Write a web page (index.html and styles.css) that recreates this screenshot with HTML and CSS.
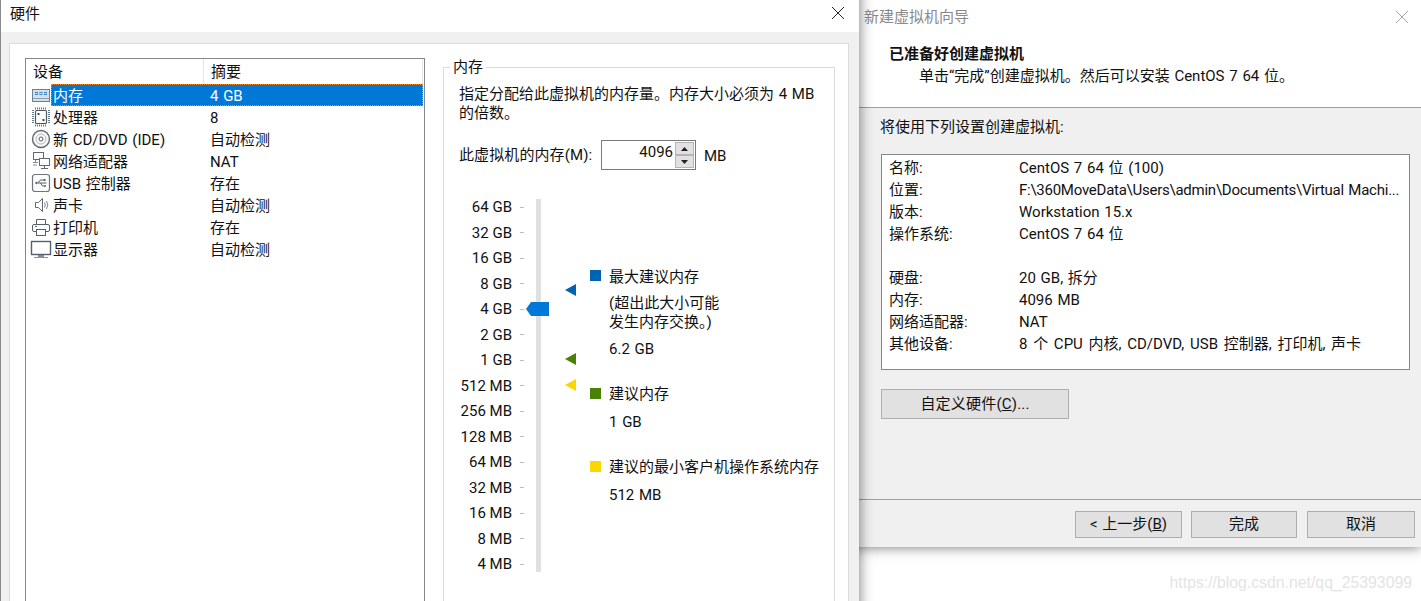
FILE: index.html
```html
<!DOCTYPE html>
<html lang="zh-CN">
<head>
<meta charset="utf-8">
<title>硬件</title>
<link rel="stylesheet" href="styles.css">
</head>
<body>
<div class="desktop">
  <section class="wizard">
    <header class="wizard-title">
      <span>新建虚拟机向导</span>
      <svg class="close" width="14" height="14" viewBox="0 0 14 14"><path d="M1 1l12 12M13 1L1 13" stroke="#a6a6a6" fill="none"/></svg>
    </header>
    <div class="wizard-head">
      <h1>已准备好创建虚拟机</h1>
      <p>单击“完成”创建虚拟机。然后可以安装 CentOS 7 64 位。</p>
    </div>
    <div class="wizard-main">
      <p class="wizard-lead">将使用下列设置创建虚拟机:</p>
      <dl class="summary">
        <dt>名称:</dt><dd>CentOS 7 64 位 (100)</dd>
        <dt>位置:</dt><dd class="path">F:\360MoveData\Users\admin\Documents\Virtual Machi...</dd>
        <dt>版本:</dt><dd>Workstation 15.x</dd>
        <dt>操作系统:</dt><dd>CentOS 7 64 位</dd>
        <dt class="gap"></dt><dd class="gap"></dd>
        <dt>硬盘:</dt><dd>20 GB, 拆分</dd>
        <dt>内存:</dt><dd>4096 MB</dd>
        <dt>网络适配器:</dt><dd>NAT</dd>
        <dt>其他设备:</dt><dd class="mixed">8 个 CPU 内核, CD/DVD, USB 控制器, 打印机, 声卡</dd>
      </dl>
      <button class="btn btn-wide" type="button">自定义硬件(<u>C</u>)...</button>
    </div>
    <footer class="wizard-foot">
      <button class="btn btn-back" type="button">&lt; 上一步(<u>B</u>)</button>
      <button class="btn btn-finish" type="button">完成</button>
      <button class="btn btn-cancel" type="button">取消</button>
    </footer>
  </section>

  <section class="hardware">
    <header class="hw-title">
      <span>硬件</span>
      <svg class="close" width="14" height="14" viewBox="0 0 14 14"><path d="M1 1l12 12M13 1L1 13" stroke="#222" fill="none"/></svg>
    </header>
    <div class="hw-body">
      <div class="hw-panel">
        <div class="devices">
          <div class="dev-head"><span>设备</span><span>摘要</span></div>
          <div class="dev-row selected">
            <svg class="ico" width="22" height="22" viewBox="0 0 22 22"><rect x="2.500" y="5.500" width="17" height="12" fill="#d3dfea" stroke="#6a8196"/><path d="M5 8h3v3H5zM9.500 8h3v3h-3zM14 8h3v3h-3z" fill="#3f86c6"/><path d="M5.500 9.500h2M10 9.500h2M14.500 9.500h2" stroke="#dbe9f5"/><path d="M3 14.500h16" stroke="#8ba0b3"/></svg>
            <div class="dev-cells"><span class="dev-name">内存</span><span>4 GB</span></div>
          </div>
          <div class="dev-row">
            <svg class="ico" width="22" height="22" viewBox="0 0 22 22"><rect x="5.500" y="4.500" width="11" height="13" rx="1" fill="#fff" stroke="#4f5a64" stroke-width="1.200"/><path d="M5 2.500h12M5 19.500h12" stroke="#66798b" stroke-width="2" stroke-dasharray="1 1"/><path d="M3 4v14M19 4v14" stroke="#66798b" stroke-width="2" stroke-dasharray="1 1"/><rect x="7.500" y="7" width="2" height="2" fill="#444"/><rect x="12.500" y="13" width="2" height="2" fill="#444"/></svg>
            <div class="dev-cells"><span class="dev-name">处理器</span><span>8</span></div>
          </div>
          <div class="dev-row">
            <svg class="ico" width="22" height="22" viewBox="0 0 22 22"><circle cx="11" cy="11" r="8.500" fill="#f7f7f7" stroke="#5f6a74" stroke-width="1.400"/><circle cx="11" cy="11" r="5" fill="none" stroke="#b4bbc1"/><circle cx="11" cy="11" r="2" fill="#fff" stroke="#56606a"/></svg>
            <div class="dev-cells"><span class="dev-name">新 CD/DVD (IDE)</span><span>自动检测</span></div>
          </div>
          <div class="dev-row">
            <svg class="ico" width="22" height="22" viewBox="0 0 22 22"><rect x="3.500" y="2.500" width="10" height="7" fill="#fff" stroke="#5f6a74"/><path d="M3 12.500h5M5.500 10v2M3 15h4" stroke="#7d8d9c"/><rect x="9.500" y="8.500" width="10" height="7" fill="#fff" stroke="#5f6a74"/><path d="M14.500 16v2M11 18.500h7" stroke="#5f6a74"/></svg>
            <div class="dev-cells"><span class="dev-name">网络适配器</span><span>NAT</span></div>
          </div>
          <div class="dev-row">
            <svg class="ico" width="22" height="22" viewBox="0 0 22 22"><rect x="2.500" y="2.500" width="17" height="17" rx="2.500" fill="#fbfbfb" stroke="#6b7680" stroke-width="1.200"/><path d="M5.500 11h11M8 11l2.500-3h3M10.500 11l2 3h1.500" fill="none" stroke="#56606a"/><path d="M5 11l2-1.500v3z" fill="#56606a"/><rect x="13.500" y="7" width="2" height="2" fill="#56606a"/><circle cx="15" cy="14" r="1" fill="#56606a"/></svg>
            <div class="dev-cells"><span class="dev-name">USB 控制器</span><span>存在</span></div>
          </div>
          <div class="dev-row">
            <svg class="ico" width="22" height="22" viewBox="0 0 22 22"><path d="M5.500 8.500h3l4-4v13l-4-4h-3z" fill="#fff" stroke="#5f6a74"/><path d="M14.500 8.500q1.500 2.500 0 5M16.500 7q2.500 4 0 8" fill="none" stroke="#7d8791"/></svg>
            <div class="dev-cells"><span class="dev-name">声卡</span><span>自动检测</span></div>
          </div>
          <div class="dev-row">
            <svg class="ico" width="22" height="22" viewBox="0 0 22 22"><path d="M6.500 8V3.500h9V8" fill="#fff" stroke="#56606a"/><rect x="2.500" y="8.500" width="17" height="7" rx="1.500" fill="#fff" stroke="#56606a"/><rect x="6.500" y="13.500" width="9" height="6" fill="#fff" stroke="#56606a"/><path d="M5 10.500h2" stroke="#56606a"/></svg>
            <div class="dev-cells"><span class="dev-name">打印机</span><span>存在</span></div>
          </div>
          <div class="dev-row">
            <svg class="ico" width="22" height="22" viewBox="0 0 22 22"><rect x="1.500" y="3.500" width="19" height="13" fill="#fff" stroke="#56606a" stroke-width="1.400"/><path d="M8 18h6" stroke="#5f6a74" stroke-width="1.500"/><path d="M4 19.500h14" stroke="#8b959e"/></svg>
            <div class="dev-cells"><span class="dev-name">显示器</span><span>自动检测</span></div>
          </div>
        </div>

        <fieldset class="memory">
          <legend>内存</legend>
          <p class="memory-desc">指定分配给此虚拟机的内存量。内存大小必须为 4 MB<br>的倍数。</p>
          <div class="mem-input">
            <label>此虚拟机的内存(M):</label>
            <div class="spin">
              <span class="spin-value">4096</span>
              <div class="spin-btns">
                <span class="spin-btn"><svg width="7" height="4" viewBox="0 0 7 4"><path d="M3.500 0L7 4H0z" fill="#222"/></svg></span>
                <span class="spin-btn"><svg width="7" height="4" viewBox="0 0 7 4"><path d="M0 0h7L3.500 4z" fill="#222"/></svg></span>
              </div>
            </div>
            <span class="unit">MB</span>
          </div>
          <div class="scale">
            <div class="scale-labels">
              <div class="tick"><span>64 GB</span></div>
              <div class="tick"><span>32 GB</span></div>
              <div class="tick"><span>16 GB</span></div>
              <div class="tick"><span>8 GB</span></div>
              <div class="tick"><span>4 GB</span></div>
              <div class="tick"><span>2 GB</span></div>
              <div class="tick"><span>1 GB</span></div>
              <div class="tick"><span>512 MB</span></div>
              <div class="tick"><span>256 MB</span></div>
              <div class="tick"><span>128 MB</span></div>
              <div class="tick"><span>64 MB</span></div>
              <div class="tick"><span>32 MB</span></div>
              <div class="tick"><span>16 MB</span></div>
              <div class="tick"><span>8 MB</span></div>
              <div class="tick"><span>4 MB</span></div>
            </div>
            <div class="track"></div>
            <svg class="thumb" width="23" height="14" viewBox="0 0 23 14"><path d="M0 7L5 0h18v14H5z" fill="#0078d7"/></svg>
            <svg class="mark mark-max" width="11" height="12" viewBox="0 0 11 12"><path d="M0 6L11 0v12z" fill="#0063b1"/></svg>
            <svg class="mark mark-rec" width="11" height="12" viewBox="0 0 11 12"><path d="M0 6L11 0v12z" fill="#498205"/></svg>
            <svg class="mark mark-min" width="11" height="12" viewBox="0 0 11 12"><path d="M0 6L11 0v12z" fill="#fcd600"/></svg>
            <div class="legend-list">
              <div class="legend-item">
                <i class="swatch swatch-max"></i>
                <div>
                  <p>最大建议内存</p>
                  <p class="note">(超出此大小可能<br>发生内存交换。)</p>
                  <p class="value value-tight">6.2 GB</p>
                </div>
              </div>
              <div class="legend-item">
                <i class="swatch swatch-rec"></i>
                <div>
                  <p>建议内存</p>
                  <p class="value">1 GB</p>
                </div>
              </div>
              <div class="legend-item">
                <i class="swatch swatch-min"></i>
                <div>
                  <p>建议的最小客户机操作系统内存</p>
                  <p class="value">512 MB</p>
                </div>
              </div>
            </div>
          </div>
        </fieldset>
      </div>
    </div>
  </section>

  <div class="watermark">https://blog.csdn.net/qq_25393099</div>
</div>
</body>
</html>
```

FILE: styles.css
```css
* { box-sizing: border-box; }
html, body { margin: 0; padding: 0; }
body {
  width: 1421px;
  height: 601px;
  overflow: hidden;
  background: #fff;
  color: #111;
  font: 15px/20px Roboto, "Noto Sans CJK SC", sans-serif;
  word-spacing: 1px;
}
p, h1, dl, dd { margin: 0; }
.desktop { position: relative; width: 1421px; height: 601px; overflow: hidden; background: #fff; }

/* Hardware dialog (front window) */
.hardware {
  position: absolute;
  left: 0;
  top: -20px;
  width: 859px;
  height: 660px;
  display: flex;
  flex-direction: column;
  background: #f0f0f0;
  border-left: 1px solid #8a8a8a;
  box-shadow: 0 0 13px rgba(0, 0, 0, .55);
  z-index: 2;
}
.hw-title {
  flex: none;
  height: 52px;
  padding: 20px 14px 0 9px;
  background: #fff;
  display: flex;
  justify-content: space-between;
  align-items: center;
}
.hw-title span { margin-top: -5px; }
.hw-title .close { margin-top: -6px; }
.hw-body { flex: 1; padding: 11px 10px 0 8px; display: flex; min-height: 0; }
.hw-panel {
  flex: 1;
  display: flex;
  gap: 18px;
  align-items: stretch;
  background: #fff;
  border: 1px solid #dcdcdc;
  padding: 14px 13px 0 15px;
}
.devices {
  flex: none;
  width: 400px;
  border: 1px solid #82878f;
  background: #fff;
}
.dev-head {
  display: grid;
  grid-template-columns: 178px 1fr;
  height: 25px;
  line-height: 27px;
  margin-right: 1px;
  border-right: 1px solid #e5e5e5;
}
.dev-head span { padding-left: 7px; }
.dev-head span:first-child { border-right: 1px solid #e5e5e5; }
.dev-row { display: flex; height: 22px; line-height: 24px; padding-right: 1px; }
.ico { flex: none; margin: 0 -1px 0 4px; }
.dev-cells { flex: 1; display: flex; padding-left: 2px; }
.dev-name { flex: none; width: 157px; white-space: nowrap; }
.selected .dev-cells {
  background: #0078d7;
  color: #fff;
  outline: 1px dotted #f08a24;
  outline-offset: -1px;
}

.memory {
  flex: none;
  width: 392px;
  margin: -1px 0 0;
  padding: 6px 0 0 15px;
  border: 1px solid #dcdcdc;
  min-inline-size: 0;
}
.memory legend { margin-left: -9px; padding: 0 3px; line-height: 20px; height: 20px; }
.memory-desc { width: 370px; padding-top: 2px; line-height: 19px; }
.mem-input { display: flex; align-items: center; height: 30px; margin-top: 17px; }
.mem-input label { width: 142px; white-space: nowrap; line-height: 22px; word-spacing: 0; letter-spacing: .1px; }
.unit { margin-top: 2px; }
.spin {
  width: 95px;
  height: 30px;
  border: 1px solid #7a7a7a;
  display: flex;
  justify-content: flex-end;
  margin-right: 8px;
  padding: 1px;
}
.spin-value { flex: 1; text-align: right; padding-right: 2px; line-height: 20px; }
.spin-btns { flex: none; width: 19px; display: flex; flex-direction: column; }
.spin-btn {
  flex: 1;
  display: flex;
  align-items: center;
  justify-content: center;
  background: #e1e1e1;
  border: 1px solid #b5b5b5;
}
.scale { position: relative; display: flex; height: 373px; margin-top: 29px; align-items: flex-start; }
.scale-labels { flex: none; width: 65px; height: 373px; display: flex; flex-direction: column; justify-content: space-between; }
.tick { display: flex; align-items: center; height: 16px; line-height: 18px; }
.tick span { width: 53px; text-align: right; white-space: nowrap; word-spacing: 0; }
.tick::after { content: ""; width: 4px; height: 1px; margin-left: 8px; background: #bdbdbd; }
.track { flex: none; width: 5px; height: 373px; margin-left: 12px; background: #dfe1e1; }
.thumb { position: absolute; left: 67px; top: 103px; }
.mark { position: absolute; left: 106px; }
.mark-max { top: 85px; }
.mark-rec { top: 154px; }
.mark-min { top: 180px; }
.legend-list { margin: 67px 0 0 49px; display: flex; flex-direction: column; gap: 25px; white-space: nowrap; }
.legend-item { display: flex; }
.legend-item:first-child p:first-child { padding-top: 1px; }
.swatch { flex: none; width: 11px; height: 11px; margin: 4px 8px 0 0; }
.swatch-max { background: #0063b1; }
.swatch-rec { background: #498205; }
.swatch-min { background: #fcd600; }
.note { line-height: 19px; margin-top: 7px; }
.value { margin-top: 8px; }
.value-tight { margin-top: 7px; }

/* Wizard (back window) */
.wizard {
  position: absolute;
  left: 840px;
  top: 0;
  width: 581px;
  height: 547px;
  display: flex;
  flex-direction: column;
  background: #f0f0f0;
  box-shadow: 0 0 12px rgba(0, 0, 0, .55);
  z-index: 1;
}
.wizard-title {
  flex: none;
  height: 33px;
  padding: 0 12px 0 24px;
  background: #fff;
  color: #8a8a8a;
  display: flex;
  justify-content: space-between;
  align-items: center;
}
.wizard-title span { margin-top: 1px; }
.wizard-head { flex: none; height: 75px; background: #fff; border-bottom: 1px solid #a0a0a0; padding: 11px 0 0 49px; }
.wizard-head h1 { font-size: 15px; line-height: 20px; font-weight: 700; }
.wizard-head p { margin: 2px 0 0 30px; }
.wizard-main { flex: none; height: 392px; padding: 9px 11px 0 41px; border-bottom: 1px solid #a0a0a0; }
.wizard-lead { margin-left: -1px; }
.summary {
  display: grid;
  grid-template-columns: 130px 1fr;
  grid-auto-rows: 22px;
  height: 216px;
  margin-top: 17px;
  padding: 2px 0 0 7px;
  border: 1px solid #828790;
  background: #fff;
  line-height: 22px;
  white-space: nowrap;
}
.path { letter-spacing: -.25px; }
.mixed { word-spacing: 2px; }
.btn {
  display: block;
  padding: 0;
  background: #e1e1e1;
  border: 1px solid #adadad;
  color: #111;
  font: inherit;
  word-spacing: inherit;
  text-align: center;
}
.btn-wide { width: 188px; height: 30px; margin-top: 19px; letter-spacing: .2px; }
.wizard-foot { flex: 1; display: flex; padding: 11px 0 0 235px; align-items: flex-start; }
.wizard-foot .btn { height: 27px; line-height: 23px; }
.btn-back { width: 107px; margin-right: 9px; }
.btn-finish { width: 106px; margin-right: 10px; }
.btn-cancel { width: 108px; }

.watermark {
  position: absolute;
  right: 9px;
  top: 572px;
  color: #e4e4e4;
  font: 15.800px/22px "Liberation Sans", sans-serif;
  word-spacing: 0;
  z-index: 3;
}
```
